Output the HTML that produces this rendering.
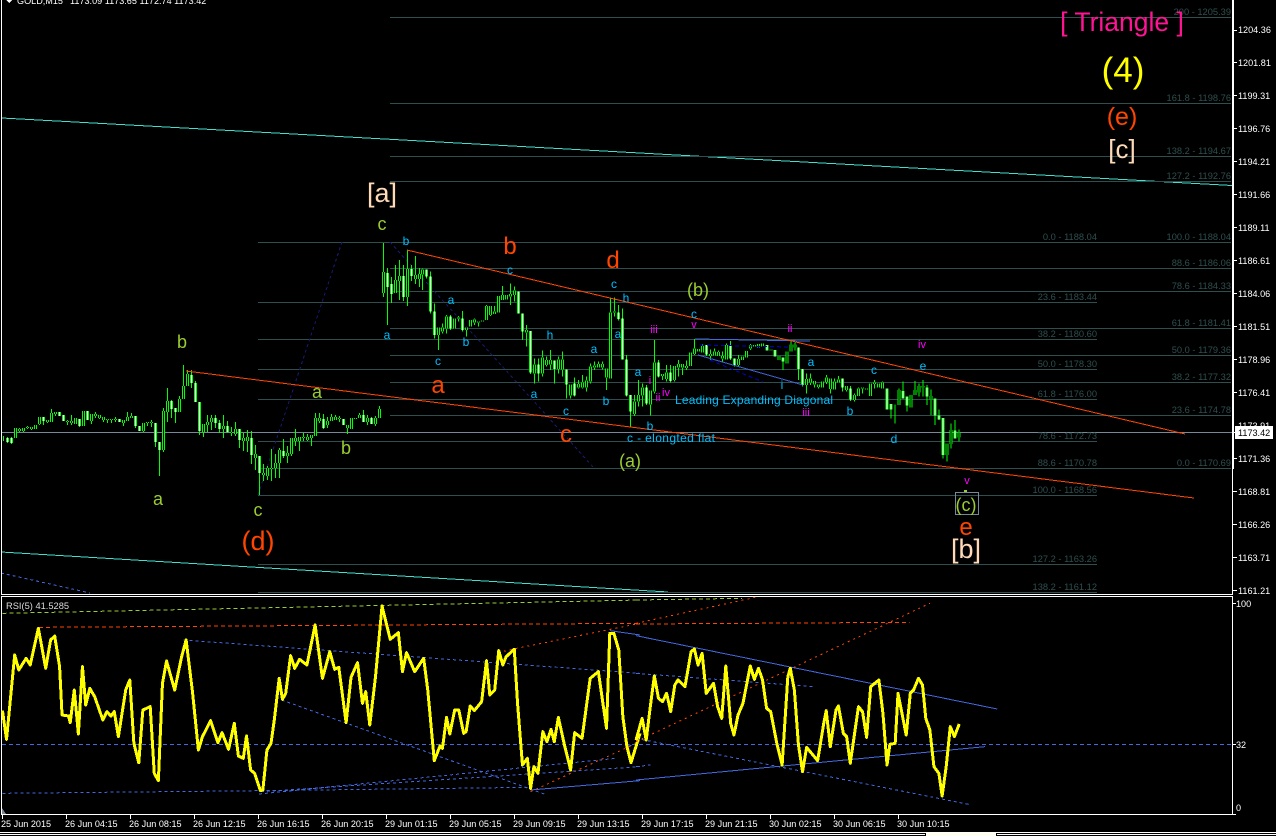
<!DOCTYPE html>
<html><head><meta charset="utf-8"><title>GOLD,M15</title>
<style>
html,body{margin:0;padding:0;background:#000;width:1276px;height:836px;overflow:hidden}
svg{display:block;font-family:"Liberation Sans",sans-serif}
.fl text{fill:#2f4f4f;font-size:9.3px;text-anchor:end}
.ax text{fill:#fff;font-size:9.1px}
.bl text{fill:#00bfff;font-size:12px;text-anchor:middle}
.mg text{fill:#f0f;font-size:11px;text-anchor:middle}
.yg text{fill:#9acd32;font-size:18px;text-anchor:middle}
.rd text{fill:#ff4500;font-size:24px;text-anchor:middle}
.pc text{fill:#ffdab9;font-size:27px;text-anchor:middle}
</style></head><body>
<svg width="1276" height="836" viewBox="0 0 1276 836" xmlns="http://www.w3.org/2000/svg" shape-rendering="crispEdges">
<defs>
<path id="u1" d="M15 428V438M19 429V431M23 428V431M27 427V428M31 427V429M35 425V429M39 417V424M47 420V422M51 413V422M55 412V414M67 421V422M71 421V423M75 418V424M83 411V426M91 414V421M95 414V416M99 415V418M103 417V420M107 419V420M111 419V420M115 419V420M123 420V423M127 417V421M131 416V418M143 423V431M147 422V423M151 422V423M163 411V450M167 401V412M179 399V412M183 386V399M187 374V386M203 424V432M207 422V425M211 418V422M223 426V429M231 432V433M235 429V434M243 438V441M247 437V441M255 454V458M263 473V475M267 468V476M271 468V469M275 463V468M279 450V463M287 453V456M291 438V454M295 438V441M299 437V441M303 437V438M307 437V440M311 435V438M315 418V436M319 418V421M327 421V425M331 417V421M335 417V420M339 418V419M347 425V428M351 418V429M355 418V419M359 415V418M367 418V422M375 418V424M379 409V418M383 272V293M395 280V293M399 276V281M407 269V297M415 275V279M419 274V279"/>
<path id="d1" d="M7 438V442M11 438V443M43 417V421M59 412V416M63 415V421M79 419V426M87 411V420M119 419V422M135 416V426M139 426V431M155 423V442M159 442V450M171 401V409M175 408V412M191 375V383M195 383V402M199 402V431M215 418V423M219 423V429M227 426V432M239 429V440M251 438V455M259 456V473M283 451V456M323 419V428M343 419V425M363 415V422M371 418V424M387 273V287M391 284V294M403 276V297M411 269V276"/>
<path id="u2" d="M6 118V134M54 292V315M66 292V305M78 260V295M102 265V295M114 262V265M138 293V300M150 270V290M162 268V278M174 274V278M186 272V275M198 228V270M210 228V255M222 245V252M234 198V248M246 195V210M258 195V208M270 192V200M282 182V195M318 300V308M342 403V430M366 382V430M378 390V405M390 390V403M414 388V417M426 388V418M450 463V497M474 462V472M486 458V472M498 452V472M510 410V455M522 407V413M534 402V412M546 402V412M558 415V443M570 247V445M582 245V247M642 515V552M654 495V515M666 473V497M690 482V523M702 397V485M726 432V438M738 427V447M762 408V450M774 402V412M786 402V412M798 408V414M810 367V408M822 355V372M834 357V365M846 348V367M870 372V378M882 365V376M894 366V378M906 378V385M918 345V388M954 387V405M966 380V390M978 363V382M990 345V355M1002 345V350M1014 342V352M1026 340V350M1052 358V362M1076 378V390M1100 365V400M1112 343V365M1124 343V352"/>
<path id="d2" d="M18 118V140M30 140V245M42 245V315M90 260V295M126 265V300M294 185V250M306 250V305M330 303V428M354 403V430M402 392V417M438 418V463M462 460V497M594 247V267M606 265V388M618 388V497M630 495V545M678 472V520M714 397V440M750 427V453M858 345V373M930 345V385M942 385V405M1040 345V362M1064 360V380M1088 382V395"/>
<path id="u3" d="M78 237V255M90 235V247M102 243V253M114 253V261M126 245V263M138 232V246M150 235V267M162 245V268M174 238V247M198 258V270M222 285V300M234 265V288M246 262V265M258 265V268M270 250V288M282 247V252M294 250V262M306 247V265M356 270V315M392 285V322M404 270V285M416 258V277M428 258V262M452 288V298M500 430V465M512 390V432M536 397V413"/>
<path id="d3" d="M54 142V207M66 207V255M186 235V262M210 265V298M320 265V328M332 312V328M368 273V295M380 290V317M440 262V290M464 295V347M476 347V358M488 354V465M524 392V415"/>
</defs>

<!-- channels -->
<g fill="none" stroke="#40e0d0">
<path d="M2 118L1232 185.5"/>
<path d="M1 552L668 592"/>
</g>
<path d="M1 573L90 593" fill="none" stroke="#4169e1" stroke-dasharray="3 3"/>

<!-- fib lines -->
<g stroke="#2f4f4f" fill="none">
<path d="M258 242.5H1097M258 302.5H1097M258 339.5H1097M258 369.5H1097M258 399.5H1097M258 441.5H1097M258 468.5H1097M258 495.5H1097M258 564.5H1097M258 592.5H1097"/>
<path d="M390 17.5H1231M390 103.5H1231M390 156.5H1231M390 181.5H1231M390 242.5H1231M390 268.5H1231M390 291.5H1231M390 328.5H1231M390 355.5H1231M390 382.5H1231M390 415.5H1231M390 468.5H1231"/>
</g>
<!-- price line -->
<path d="M2 432.5H1232" stroke="#778899" fill="none"/>

<!-- dashed navy -->
<g stroke="#191970" fill="none" stroke-dasharray="3 3">
<path d="M258 495L342 242"/>
<path d="M390 242L594 468"/>
</g>

<!-- candles part 1 -->
<g fill="none">
<g transform="translate(.5 0)">
<path stroke="#0f0" d="M3 436V441M7 437V443M11 437V444M15 428V438M19 428V432M23 428V432M27 426V429M31 427V430M35 425V429M39 417V425M43 417V425M47 420V423M51 409V422M55 412V416M59 412V416M63 415V421M67 420V425M71 415V425M75 418V424M79 419V427M83 411V426M87 411V420M91 414V424M95 412V418M99 415V419M103 417V422M107 419V423M111 419V423M115 417V422M119 419V422M123 420V426M127 412V421M131 413V418M135 416V428M139 426V431M143 423V432M147 422V426M151 420V427M155 423V447M159 442V476M163 408V452M167 388V422M171 400V418M175 408V423M179 396V412M183 365V399M187 370V386M191 370V388M195 381V402M199 402V435M203 424V437M207 415V432M211 415V430M215 415V428M219 420V433M223 415V438M227 421V433M231 427V436M235 422V436M239 429V448M243 433V451M247 430V452M251 431V464M255 445V470M259 456V495M263 464V481M267 466V480M271 449V481M275 454V478M279 448V478M283 439V458M287 446V463M291 438V456M295 429V446M299 437V451M303 433V441M307 434V441M311 435V446M315 413V436M319 413V423M323 414V429M327 417V428M331 414V421M335 415V420M339 416V422M343 419V425M347 425V434M351 418V429M355 418V419M359 413V418M363 410V422M367 415V425M371 417V424M375 416V426M379 406V418M383 243V297M387 268V325M391 277V303M395 265V293M399 260V300M403 265V301M407 250V306M411 265V281M415 256V284M419 268V287"/>
<use href="#u1" stroke="#0f0" stroke-width="3"/>
<use href="#d1" stroke="#0f0" stroke-width="3"/>
<use href="#u1" stroke="#000" stroke-width="1"/>
<use href="#d1" stroke="#fff" stroke-width="1"/>
</g>
<g transform="translate(420.5 230) scale(.33333)">
<path stroke="#0f0" stroke-width="3" d="M6 115V180M18 118V145M30 125V250M42 220V325M54 292V360M66 280V310M78 255V310M90 255V300M102 265V295M114 258V275M126 243V305M138 293V320M150 270V290M162 265V285M174 274V290M186 272V275M198 225V270M210 228V258M222 228V252M234 198V248M246 168V210M258 195V208M270 160V225M282 170V215M294 185V250M306 250V330M318 285V350M330 303V432M342 385V460M354 385V455M366 362V440M378 380V410M390 360V420M402 392V460M414 380V430M426 365V440M438 418V505M450 463V505M462 442V500M474 450V475M486 435V475M498 440V485M510 400V460M522 395V420M534 395V412M546 395V418M558 415V480M570 205V445M582 202V260M594 225V272M606 235V388M618 375V500M630 495V592M642 495V558M654 450V530M666 460V530M678 465V525M690 482V557M702 330V490M714 390V442M726 432V450M738 405V455M750 405V458M762 408V455M774 390V440M786 402V435M798 392V420M810 367V408M822 327V375M834 357V365M846 342V367M858 345V378M870 358V390M882 355V376M894 362V378M906 365V395M918 340V388M930 333V390M942 385V410M954 375V410M966 380V390M978 363V382M990 342V360M1002 345V350M1014 342V352M1026 340V350M1040 345V362M1052 358V362M1064 360V380M1076 378V390M1088 382V420M1100 365V400M1112 335V365M1124 338V362"/>
<use href="#u2" stroke="#0f0" stroke-width="9"/>
<use href="#d2" stroke="#0f0" stroke-width="9"/>
<use href="#u2" stroke="#000" stroke-width="3"/>
<use href="#d2" stroke="#fff" stroke-width="3"/>
</g>
<g transform="translate(780.5 300) scale(.33333)">
<path stroke="#0f0" stroke-width="3" d="M54 142V240M66 207V260M78 220V280M90 220V255M102 243V262M114 253V265M126 245V263M138 225V252M150 235V280M162 235V268M174 228V247M186 235V275M198 258V275M210 258V303M222 280V305M234 262V288M246 262V280M258 265V268M270 250V288M282 240V265M294 250V262M306 245V265M320 265V328M332 312V355M344 313V370M356 265V315M368 245V295M380 290V335M392 285V322M404 243V285M416 250V290M428 240V290M440 255V315M452 268V345M464 295V375M476 328V360M488 354V475M500 430V485M512 370V445M524 360V415M536 388V425"/>
<use href="#u3" stroke="#0f0" stroke-width="9"/>
<use href="#d3" stroke="#0f0" stroke-width="9"/>
<use href="#u3" stroke="#000" stroke-width="3"/>
<use href="#d3" stroke="#fff" stroke-width="3"/>
</g>
</g>

<!-- diagonal lines -->
<g fill="none">
<path d="M695 339L810 341M698 355L803 385" stroke="#4169e1"/>
<path d="M700 345L790 347M710 360L763 382" stroke="#0000cd" stroke-dasharray="4 3"/>
<!-- red trend lines -->
<path d="M407 250L1185 434" stroke="#ff4500"/>
<path d="M186 371L1194 498" stroke="#ff4500"/>
<!-- box -->
<rect x="955.5" y="492.5" width="23" height="22" stroke="#778899"/>
</g>
<rect x="964" y="490" width="3" height="2" fill="#9acd32"/>

<!-- fib labels -->
<g class="fl">
<text x="1231" y="15">200 - 1205.39</text><text x="1231" y="101">161.8 - 1198.76</text><text x="1231" y="154">138.2 - 1194.67</text><text x="1231" y="179">127.2 - 1192.76</text><text x="1231" y="240">100.0 - 1188.04</text><text x="1231" y="266">88.6 - 1186.06</text><text x="1231" y="289">78.6 - 1184.33</text><text x="1231" y="326">61.8 - 1181.41</text><text x="1231" y="353">50.0 - 1179.36</text><text x="1231" y="380">38.2 - 1177.32</text><text x="1231" y="413">23.6 - 1174.78</text><text x="1231" y="466">0.0 - 1170.69</text>
<text x="1097" y="240">0.0 - 1188.04</text><text x="1097" y="300">23.6 - 1183.44</text><text x="1097" y="337">38.2 - 1180.60</text><text x="1097" y="367">50.0 - 1178.30</text><text x="1097" y="397">61.8 - 1176.00</text><text x="1097" y="439">78.6 - 1172.73</text><text x="1097" y="466">88.6 - 1170.78</text><text x="1097" y="493">100.0 - 1168.56</text><text x="1097" y="562">127.2 - 1163.26</text><text x="1097" y="590">138.2 - 1161.12</text>
</g>

<!-- wave labels -->
<g class="yg">
<text x="182" y="348">b</text><text x="158" y="505">a</text><text x="258" y="516">c</text><text x="317" y="398">a</text><text x="346" y="454">b</text><text x="382" y="230">c</text>
<text x="698" y="296">(b)</text><text x="630" y="467">(a)</text><text x="966" y="511">(c)</text>
</g>
<g class="rd">
<text x="258" y="550" style="font-size:27px">(d)</text>
<text x="438" y="393">a</text><text x="510" y="254">b</text><text x="566" y="442">c</text><text x="613" y="268">d</text><text x="966" y="535">e</text>
</g>
<g class="pc">
<text x="382" y="202">[a]</text><text x="966" y="558">[b]</text>
</g>
<g class="bl">
<text x="406" y="245">b</text><text x="387" y="339">a</text><text x="510" y="274">c</text><text x="451" y="304">a</text><text x="466" y="346">b</text><text x="438" y="365">c</text><text x="550" y="339">h</text><text x="534" y="398">a</text><text x="594" y="353">a</text><text x="566" y="415">c</text><text x="606" y="405">b</text><text x="614" y="288">c</text><text x="626" y="302">h</text><text x="618" y="338">a</text><text x="638" y="376">a</text><text x="650" y="430">b</text><text x="694" y="318">c</text><text x="811" y="366">a</text><text x="850" y="415">b</text><text x="874" y="374">c</text><text x="923" y="370">e</text><text x="894" y="443">d</text><text x="782" y="389">i</text>
<text x="754" y="404" textLength="158">Leading Expanding Diagonal</text>
<text x="671" y="442" textLength="88">c - elongted flat</text>
</g>
<g class="mg">
<text x="654" y="333">iii</text><text x="694" y="328">v</text><text x="650" y="384">i</text><text x="658" y="401">ii</text><text x="666" y="396">iv</text><text x="790" y="332">ii</text><text x="806" y="416">iii</text><text x="922" y="348">iv</text><text x="967" y="484">v</text>
</g>
<text x="1122" y="31" text-anchor="middle" fill="#ff1493" style="font-size:26.5px">[ Triangle ]</text>
<text x="1123" y="82" text-anchor="middle" fill="#ff0" style="font-size:35px">(4)</text>
<text x="1122" y="125" text-anchor="middle" fill="#ff4500" style="font-size:25px">(e)</text>
<text x="1122" y="158" text-anchor="middle" fill="#ffdab9" style="font-size:26px">[c]</text>

<!-- header -->
<path d="M6 0H12L9 3Z" fill="#fff"/>
<text x="17" y="4" fill="#fff" style="font-size:9.1px">GOLD,M15</text>
<text x="70" y="4" fill="#fff" style="font-size:9.1px">1173.09 1173.65 1172.74 1173.42</text>

<!-- frames -->
<g fill="#fff">
<rect x="1" y="0" width="1" height="595"/>
<rect x="1" y="594" width="1232" height="1"/>
<rect x="1232" y="0" width="2" height="469"/>
<rect x="1232" y="469" width="1" height="126"/>
<rect x="1" y="596" width="1232" height="1"/>
<rect x="1" y="596" width="1" height="219"/>
<rect x="1232" y="596" width="1" height="219"/>
<rect x="1" y="814" width="1232" height="1"/>
<rect x="0" y="832" width="1276" height="1"/>
<rect x="0" y="834" width="925" height="1"/>
<rect x="997" y="834" width="279" height="1"/>
<rect x="926" y="833" width="70" height="3" fill="#fffff0"/>
</g>
<path d="M2 808L6 814H2Z" fill="#778899"/>

<!-- price axis -->
<g class="ax">
<path stroke="#fff" d="M1233 30.5H1237M1233 62.5H1237M1233 95.5H1237M1233 128.5H1237M1233 161.5H1237M1233 194.5H1237M1233 227.5H1237M1233 260.5H1237M1233 293.5H1237M1233 326.5H1237M1233 359.5H1237M1233 392.5H1237M1233 432.5H1237M1233 458.5H1237M1233 491.5H1237M1233 524.5H1237M1233 557.5H1237M1233 590.5H1237M1233 603.5H1236M1233 744.5H1236M1233 814.5H1236" fill="none"/>
<text x="1238" y="33">1204.36</text><text x="1238" y="66">1201.81</text><text x="1238" y="99">1199.31</text><text x="1238" y="132">1196.76</text><text x="1238" y="165">1194.21</text><text x="1238" y="198">1191.66</text><text x="1238" y="231">1189.11</text><text x="1238" y="264">1186.61</text><text x="1238" y="297">1184.06</text><text x="1238" y="330">1181.51</text><text x="1238" y="363">1178.96</text><text x="1238" y="396">1176.41</text><text x="1238" y="429">1173.91</text><text x="1238" y="462">1171.36</text><text x="1238" y="495">1168.81</text><text x="1238" y="528">1166.26</text><text x="1238" y="561">1163.71</text><text x="1238" y="594">1161.21</text>
<rect x="1235" y="426" width="38" height="13" fill="#fff"/>
<text x="1238" y="436" style="fill:#000">1173.42</text>
<text x="1236" y="607">100</text><text x="1236" y="748">32</text><text x="1236" y="811">0</text>
</g>

<!-- RSI -->
<text x="6" y="609" fill="#ddd" style="font-size:9.3px">RSI(5) 41.5285</text>
<g fill="none">
<path d="M2 744.5H1232" stroke="#4169e1" stroke-dasharray="4 3"/>
<g transform="translate(0 590) scale(.40816 .33333)">
<path vector-effect="non-scaling-stroke" stroke="#9acd32" stroke-dasharray="4 3" d="M6 70L1568 30"/>
<path vector-effect="non-scaling-stroke" stroke="#ff4500" stroke-dasharray="4 3" d="M95 112L1568 100"/>
<path vector-effect="non-scaling-stroke" stroke="#ff4500" stroke-dasharray="2 4" d="M1220 188L1262 176L1568 100M1300 605L1568 455"/>
<path vector-effect="non-scaling-stroke" stroke="#4169e1" stroke-dasharray="3 3" d="M450 150L1568 250M690 330L1340 615M6 610L640 602L1300 592M635 612L1510 505M640 605L1568 530M1540 465L1568 472"/>
<path vector-effect="non-scaling-stroke" stroke="#4169e1" d="M1300 600L1568 572M1495 122L1568 135"/>
<path vector-effect="non-scaling-stroke" stroke="#ff0" stroke-width="3" stroke-linejoin="round" d="M6 362L16 448L30 270L36 195L46 240L64 205L74 225L94 115L112 235L124 150L134 138L146 230L152 375L168 378L172 398L182 300L192 432L202 230L210 345L220 295L232 320L252 390L262 365L272 378L280 365L290 440L308 300L318 270L328 460L340 518L350 360L368 350L378 550L388 572L398 280L408 213L428 300L445 200L456 150L472 310L486 480L496 440L516 392L534 458L544 428L560 478L574 400L584 498L596 505L604 438L614 540L624 550L638 602L644 600L654 480L664 460L672 390L684 265L692 328L700 310L712 197L722 235L734 208L752 225L772 105L790 265L808 185L820 238L830 232L848 398L860 262L876 218L888 340L896 305L906 405L920 260L936 48L956 148L976 128L986 245L996 188L1016 245L1038 205L1048 300L1064 512L1078 468L1084 475L1094 382L1102 432L1114 360L1124 360L1136 430L1142 425L1152 348L1162 362L1180 335L1192 212L1200 315L1212 300L1222 182L1232 225L1240 200L1260 178L1268 340L1280 525L1292 505L1300 595L1308 530L1318 550L1330 425L1340 455L1350 418L1358 455L1368 382L1382 460L1398 540L1408 428L1426 445L1446 265L1466 245L1486 415L1494 130L1504 130L1516 180L1526 380L1536 470L1546 518L1568 430"/>
</g>
<g transform="translate(636 590) scale(.40816 .33333)">
<path vector-effect="non-scaling-stroke" stroke="#9acd32" stroke-dasharray="4 3" d="M0 30L260 25"/>
<path vector-effect="non-scaling-stroke" stroke="#ff4500" stroke-dasharray="4 3" d="M0 102L670 97"/>
<path vector-effect="non-scaling-stroke" stroke="#ff4500" stroke-dasharray="2 4" d="M0 100L300 20M0 455L720 40"/>
<path vector-effect="non-scaling-stroke" stroke="#4169e1" stroke-dasharray="3 3" d="M0 250L435 290M0 530L35 525M0 445L815 643"/>
<path vector-effect="non-scaling-stroke" stroke="#4169e1" d="M0 570L855 470M0 137L885 357"/>
<path vector-effect="non-scaling-stroke" stroke="#ff0" stroke-width="3" stroke-linejoin="round" d="M0 450L15 385L25 450L35 350L45 258L55 325L65 335L75 310L85 365L95 285L103 270L120 290L135 185L143 177L152 225L162 190L172 310L190 280L200 350L210 385L220 228L232 400L240 435L250 375L262 340L280 228L290 268L300 235L310 270L320 355L330 365L345 460L358 525L372 260L378 235L388 300L398 465L408 545L418 472L445 512L460 400L466 362L476 470L490 360L496 348L508 430L516 440L525 520L545 350L555 365L565 442L575 290L595 270L605 370L615 525L622 463L635 460L642 310L662 435L672 310L680 300L692 265L702 285L710 385L720 420L730 530L742 550L750 618L760 530L770 410L780 440L792 402"/>
</g>
</g>

<!-- time axis -->
<g class="ax">
<path stroke="#fff" fill="none" d="M2.5 815V819M66.5 815V819M130.5 815V819M194.5 815V819M258.5 815V819M322.5 815V819M386.5 815V819M450.5 815V819M514.5 815V819M578.5 815V819M642.5 815V819M706.5 815V819M770.5 815V819M834.5 815V819M898.5 815V819"/>
<text x="1" y="827">25 Jun 2015</text><text x="65" y="827">26 Jun 04:15</text><text x="129" y="827">26 Jun 08:15</text><text x="193" y="827">26 Jun 12:15</text><text x="257" y="827">26 Jun 16:15</text><text x="321" y="827">26 Jun 20:15</text><text x="385" y="827">29 Jun 01:15</text><text x="449" y="827">29 Jun 05:15</text><text x="513" y="827">29 Jun 09:15</text><text x="577" y="827">29 Jun 13:15</text><text x="641" y="827">29 Jun 17:15</text><text x="705" y="827">29 Jun 21:15</text><text x="769" y="827">30 Jun 02:15</text><text x="833" y="827">30 Jun 06:15</text><text x="897" y="827">30 Jun 10:15</text>
</g>
</svg>
</body></html>
